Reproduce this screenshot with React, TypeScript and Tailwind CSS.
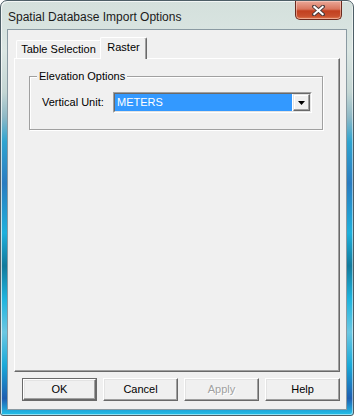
import * as React from "react";

const font = { fontFamily: '"Liberation Sans", Arial, sans-serif' };

const CloseButton = () => (
  <div className="mr-[5px] flex h-[19px] w-[47px] items-center justify-center rounded-b-[5px] border border-t-0 border-[#6b2a1e] bg-[linear-gradient(180deg,#eaa898_0%,#d9765e_45%,#c2401f_55%,#c9502e_85%,#e27d52_100%)] shadow-[inset_0_0_0_1px_rgba(255,220,210,0.5)]">
    <svg width="13" height="11" viewBox="0 0 13 11">
      <path d="M2 1.5 L11 9.5 M11 1.5 L2 9.5" stroke="#4a3a3a" strokeWidth="3.8" strokeLinecap="square" />
      <path d="M2.3 1.8 L10.7 9.2 M10.7 1.8 L2.3 9.2" stroke="#ffffff" strokeWidth="2" strokeLinecap="square" />
    </svg>
  </div>
);

type ButtonProps = {
  label: string;
  isDefault?: boolean;
  disabled?: boolean;
};

const DialogButton = ({ label, isDefault, disabled }: ButtonProps) => (
  <div
    className={
      isDefault
        ? "h-[23px] w-[75px] border border-[#696969] bg-[#f0f0f0]"
        : "h-[23px] w-[75px] bg-[#f0f0f0]"
    }
  >
    <div
      className={
        "flex h-full w-full items-center justify-center border border-t-white border-l-white border-r-[#696969] border-b-[#696969] shadow-[inset_-1px_-1px_0_#a0a0a0,inset_1px_1px_0_#e3e3e3] text-[11px] " +
        (disabled
          ? "text-[#a0a0a0] [text-shadow:1px_1px_0_#ffffff]"
          : "text-black")
      }
    >
      {label}
    </div>
  </div>
);

export default function App() {
  return (
    <div
      style={font}
      className="flex h-[416px] w-[354px] flex-col rounded-t-[7px] rounded-b-[3px] border border-[#4d5e66] bg-[linear-gradient(180deg,#d4e0dc_0%,#dbe6e3_12%,#c4d6d4_22%,#8fb9c6_28%,#2fa4d0_34%,#2a7cc0_44%,#1fb0dc_56%,#137a9c_64%,#1fb4de_72%,#6cc7e2_80%,#1aa9d8_88%,#1e5eb0_96%,#22c3ea_100%)] px-[6px] pb-[5px] shadow-[inset_1px_1px_0_rgba(255,255,255,0.7),inset_-1px_-1px_0_rgba(255,255,255,0.5)]"
    >
      <div className="flex h-[28px] items-start justify-between">
        <div className="ml-[1px] mt-[7px] text-[12px] text-[#1b1b1b]">
          Spatial Database Import Options
        </div>
        <CloseButton />
      </div>

      <div className="flex flex-1 flex-col border border-[#8a9aa2] bg-[#f0f0f0] px-[6px] pt-[7px] pb-[8px]">
        <div className="flex h-[21px] items-end pl-[2px]">
          <div className="flex h-[18px] w-[85px] items-center justify-center rounded-t-[2px] border-l border-t border-r border-l-white border-t-white border-r-[#a0a0a0] text-[11px] text-black">
            Table Selection
          </div>
          <div className="relative z-10 -mb-px -ml-[1px] flex h-[22px] w-[47px] items-start justify-center rounded-t-[2px] border-l border-t border-r border-l-white border-t-white border-r-[#696969] bg-[#f0f0f0] pt-[1px] text-[11px] text-black shadow-[inset_-1px_0_0_#a0a0a0]">
            Raster
          </div>
        </div>

        <div className="h-[314px] border border-t-white border-l-white border-r-[#696969] border-b-[#696969] shadow-[inset_-1px_-1px_0_#a0a0a0]">
          <div className="relative ml-[14px] mt-[17px] h-[54px] w-[294px] border border-[#a0a0a0] shadow-[inset_1px_1px_0_#ffffff,1px_1px_0_#ffffff]">
            <div className="absolute left-[7px] top-[-8px] bg-[#f0f0f0] px-[2px] text-[11px] leading-[14px] text-black">
              Elevation Options
            </div>
            <div className="mt-[15px] flex items-center">
              <div className="ml-[12px] w-[71px] text-[11px] text-black">
                Vertical Unit:
              </div>
              <div className="flex h-[21px] w-[199px] border border-t-[#a0a0a0] border-l-[#a0a0a0] border-r-white border-b-white">
                <div className="flex flex-1 items-stretch border border-t-[#696969] border-l-[#696969] border-r-[#e3e3e3] border-b-[#e3e3e3] bg-white">
                  <div className="flex flex-1 items-center bg-[#3399ff] pl-[2px] text-[11px] text-white">
                    METERS
                  </div>
                  <div className="ml-[1px] flex w-[17px] items-center justify-center border border-t-[#e3e3e3] border-l-[#e3e3e3] border-r-[#696969] border-b-[#696969] bg-[#f0f0f0] shadow-[inset_-1px_-1px_0_#a0a0a0,inset_1px_1px_0_#ffffff]">
                    <svg width="7" height="4" viewBox="0 0 7 4">
                      <path d="M0 0 H7 L3.5 4 Z" fill="#000000" />
                    </svg>
                  </div>
                </div>
              </div>
            </div>
          </div>
        </div>

        <div className="mt-[6px] flex justify-end gap-[6px]">
          <DialogButton label="OK" isDefault />
          <DialogButton label="Cancel" />
          <DialogButton label="Apply" disabled />
          <DialogButton label="Help" />
        </div>
      </div>
    </div>
  );
}
